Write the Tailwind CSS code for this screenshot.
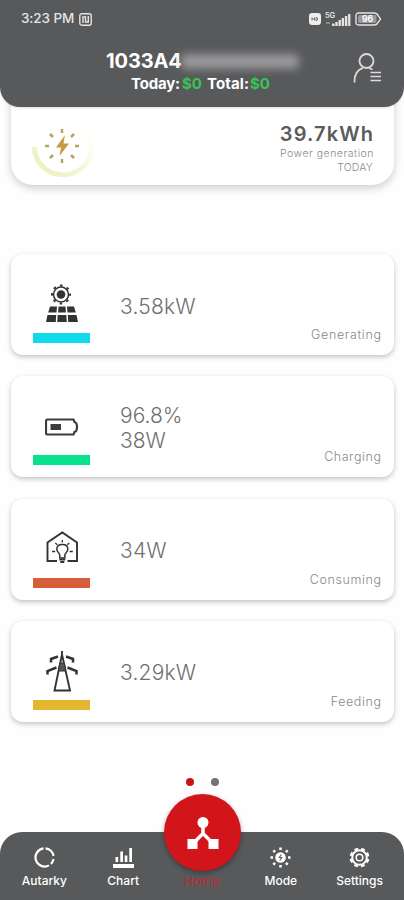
<!DOCTYPE html>
<html lang="en">

<head>
  <meta charset="UTF-8" />
  <meta name="viewport" content="width=device-width, initial-scale=1" />
  <title>Power Monitor</title>
  <script src="https://cdn.jsdelivr.net/npm/@tailwindcss/browser@4"></script>
</head>

<body class="bg-[#fefefe] h-[900px] flex flex-col overflow-hidden font-['Inter',sans-serif] text-[#707070]">
  <!-- Header -->
  <header class="relative z-10 shrink-0 h-[107px] bg-[#58595b] rounded-b-[20px] shadow-sm text-white">
    <div class="flex items-center justify-between h-[38px] pl-[21px] pr-[22px] text-[#e4e4e4]">
      <div class="flex items-center gap-[4px]">
        <span class="text-[13.5px] leading-none font-medium tracking-[-0.1px] w-[54px] whitespace-nowrap">3:23 PM</span>
        <svg class="w-[13px] h-[13px]" viewBox="0 0 13 13" fill="none" stroke="currentColor" stroke-width="1.4">
          <rect x=".8" y=".8" width="11.4" height="11.4" rx="2" />
          <path d="M4 10V4h2.5v4M9.3 3v6H6.5V5.5" />
        </svg>
      </div>
      <div class="flex items-center">
        <svg class="w-[12px] h-[12px] mr-[4px]" viewBox="0 0 12 12">
          <rect width="12" height="12" rx="3" fill="#eee" />
          <path d="M3 4.5v3M5.5 4.5v3M3 6h2.5M7 4.5h1q1.500 1.5 0 3H7z" stroke="#777" fill="none" />
        </svg>
        <svg class="w-[26px] h-[16px] mr-[4px]" viewBox="0 0 26 16" fill="currentColor">
          <text x="0" y="7" font-size="7.5" font-weight="600" textLength="10">5G</text>
          <path d="M7 12.5h2.5V15H7zM10.3 11h2.4v4h-2.4zM13.5 9h2.4v6h-2.4zM16.7 7h2.4v8h-2.4zM19.9 5h2.4v10h-2.4zM23.1 3h2.3v12h-2.3z" />
          <path d="M1 12h4" stroke="#8b8b8b" stroke-width="2" />
        </svg>
        <svg class="w-[27px] h-[14px]" viewBox="0 0 27 14">
          <path d="M3.5 1H19q3 0 4 2.5l2.5 3.500-2.5 3.500Q22 13 19 13H3.5Q1 13 1 10.5v-7Q1 1 3.5 1z" fill="none" stroke="currentColor" stroke-width="1.4" />
          <rect x="3" y="3" width="18.5" height="8" rx="1.5" fill="#999" />
          <text x="7" y="10" font-size="8.5" font-weight="700" fill="#fff" textLength="11">96</text>
        </svg>
      </div>
    </div>

    <div class="flex">
      <div class="w-[106px] shrink-0"></div>
      <div class="w-[196px]">
        <div class="flex h-[46px] items-center">
          <span class="text-[20px] font-bold leading-none tracking-[-0.1px] w-[75px] whitespace-nowrap">1033A4</span>
          <span class="w-[118px] h-[15px] rounded-[5px] bg-[#b3b3b5]/70 blur-[4px]"></span>
        </div>
        <div class="pl-[25px] -mt-[8px] text-[15px] leading-[15px] font-bold whitespace-nowrap flex">
          <span class="w-[51px] tracking-[-0.2px]">Today:</span>
          <span class="w-[25px] text-[#36c552]">$0</span>
          <span class="w-[43px] tracking-[0.1px]">Total:</span>
          <span class="text-[#36c552]">$0</span>
        </div>
      </div>
      <svg class="w-[30px] h-[32px] ml-[50px] mt-[14px]" viewBox="0 0 30 32" fill="none" stroke="#dcdcdc" stroke-width="1.8">
        <circle cx="14.5" cy="9" r="7" />
        <path d="M2.5 30.500C2 23 5.500 17.500 11 16M17 16l3.5 1.500" />
        <path d="M18.5 20.500H29M18.500 24.500H29M18.500 28.500H29" stroke-width="1.5" />
      </svg>
    </div>
  </header>

  <main class="flex-1 px-[11px]">
    <!-- Today's generation -->
    <section class="-mt-[27px] h-[105px] w-[383px] pt-[27px] bg-white rounded-[22px] shadow-[0_3px_8px_rgba(0,0,0,0.2)] flex justify-between">
      <svg class="w-[64px] h-[64px] ml-[19px] mt-[8px]" viewBox="0 0 64 64" fill="none">
        <defs>
          <linearGradient id="ring" x1="0" y1="1" x2="1" y2="0">
            <stop offset="0" stop-color="#ebefb9" />
            <stop offset=".55" stop-color="#f7f8e2" />
            <stop offset=".85" stop-color="#fffffc" />
          </linearGradient>
        </defs>
        <path d="M4.5 32A28.500 27.500 0 1 0 40 5.500" stroke="url(#ring)" stroke-width="5" />
        <path d="M32 14v4M32 44v4M15 31h4M45 31h4M20 19l3 3M41 40l3 3M20 43l3-3M41 22l3-3" stroke="#b3a65c" stroke-width="2.5" />
        <path d="M35 20L26 32.500h5L29.500 41 39 28.500h-5.500z" fill="#c59a43" />
      </svg>
      <div class="pr-[21px] pt-[17px] text-right whitespace-nowrap">
        <div class="text-[20px] leading-[20px] font-semibold tracking-[1.1px] -mr-[1px] text-[#5b5b5b]">39.7kWh</div>
        <div class="mt-[3px] text-[10.5px] leading-[14px] font-light tracking-[0.5px] -mr-[1px] text-[#888]">Power generation</div>
        <div class="text-[10.5px] leading-[14px] font-light tracking-[0.2px] text-[#888]">TODAY</div>
      </div>
    </section>

    <div class="mt-[69px] w-[383px] flex flex-col gap-[21.3px]">
      <!-- Generating -->
      <section class="h-[101px] bg-white rounded-[12px] shadow-[0_2px_5px_rgba(0,0,0,0.24)] flex">
        <div class="w-[57px] ml-[22px] pt-[29px] flex flex-col items-center">
          <svg class="w-[34px] h-[40px]" viewBox="0 0 34 40" fill="#333">
            <circle cx="16" cy="11.500" r="7.500" fill="none" stroke="#333" stroke-width="1.500" />
            <circle cx="16" cy="11.500" r="9" fill="none" stroke="#333" stroke-width="2" stroke-dasharray="2.600 4.469" stroke-dashoffset="1.300" />
            <circle cx="16" cy="11.500" r="4.300" />
            <path d="M5 23.500h7l-.5 6H3.200zM13.500 23.500h7l.4 6h-7.800zM22 23.500h7l1.800 6h-8.300zM2.500 32h8.700l-.4 7H1zM12.700 32h8.600l.5 7h-9.600zM22.800 32h8.700L33 39h-9.800z" />
          </svg>
          <div class="w-[57px] h-[10px] mt-[10px] bg-[#12daed]"></div>
        </div>
        <div class="ml-[30px] self-center pt-[3px] text-[21px] leading-[25px] font-light tracking-[0.2px]">3.58kW</div>
        <div class="ml-auto self-end pr-[13px] pb-[11px] text-[12.5px] leading-[18px] font-light tracking-[0.65px] -mr-[0.6px] text-[#888]">Generating</div>
      </section>

      <!-- Charging -->
      <section class="h-[101px] bg-white rounded-[12px] shadow-[0_2px_5px_rgba(0,0,0,0.24)] flex">
        <div class="w-[57px] ml-[22px] pt-[29px] flex flex-col items-center">
          <svg class="w-[34px] h-[40px]" viewBox="0 0 34 40" fill="none">
            <path d="M2.500 14.500h26l1 2.500q2.500.5 2.500 5t-2.500 5l-1 2.500h-26Q1 29.500 1 28V16Q1 14.500 2.500 14.500z" stroke="#3c3c3e" stroke-width="2.200" />
            <path d="M5.500 19H16v6H5.500z" fill="#3c3c3e" />
          </svg>
          <div class="w-[57px] h-[10px] mt-[10px] bg-[#07e08c]"></div>
        </div>
        <div class="ml-[30px] self-center pt-[3px] text-[21px] leading-[25px] font-light">96.8%<br />38W</div>
        <div class="ml-auto self-end pr-[13px] pb-[11px] text-[12.5px] leading-[18px] font-light tracking-[0.55px] -mr-[0.5px] text-[#888]">Charging</div>
      </section>

      <!-- Consuming -->
      <section class="h-[101px] bg-white rounded-[12px] shadow-[0_2px_5px_rgba(0,0,0,0.24)] flex">
        <div class="w-[57px] ml-[22px] pt-[29px] flex flex-col items-center">
          <svg class="w-[34px] h-[40px]" viewBox="0 0 34 40" fill="none" stroke="#333" stroke-width="1.900">
            <path d="M12 33H2.500V14.500L17.300 4.500 32 14.500V33H22.500" />
            <path d="M14.800 30v-2.500q0-1.500-1.500-3-1.500-1.500-1.500-3.500 0-4.500 5.500-4.500t5.500 4.500q0 2-1.500 3.500t-1.500 3V30z" stroke-width="1.500" />
            <path d="M14.300 31.500h6M15.300 34h4" stroke-width="2" />
            <path d="M17.300 12v2.500M10.300 15l2 1.800M24.300 15l-2 1.800M7 23.500h3.200M24.600 23.500h3.200" stroke-width="1.300" />
          </svg>
          <div class="w-[57px] h-[10px] mt-[10px] bg-[#d75e3b]"></div>
        </div>
        <div class="ml-[30px] self-center pt-[3px] text-[21px] leading-[25px] font-light tracking-[0.2px]">34W</div>
        <div class="ml-auto self-end pr-[13px] pb-[11px] text-[12.5px] leading-[18px] font-light tracking-[0.6px] -mr-[0.6px] text-[#888]">Consuming</div>
      </section>

      <!-- Feeding -->
      <section class="h-[101px] bg-white rounded-[12px] shadow-[0_2px_5px_rgba(0,0,0,0.24)] flex">
        <div class="w-[57px] ml-[22px] pt-[29px] flex flex-col items-center">
          <svg class="w-[34px] h-[42px]" viewBox="0 0 34 42" fill="none" stroke="#333" stroke-width="2">
            <path d="M17 1v4M17 4.500L9.500 40.500h15.500z" stroke-width="1.900" />
            <path d="M14.800 13h4.400l1.500 8h-7.400z" fill="#555" stroke-width="1" />
            <path d="M13 6.500L6 9v3.500M21 6.500L28 9v3.500M11.500 17.500L2.500 21v3.500M22.500 17.500l9 3.500v3.500" stroke-width="2.500" />
          </svg>
          <div class="w-[57px] h-[10px] mt-[8px] bg-[#e3b72f]"></div>
        </div>
        <div class="ml-[30px] self-center pt-[3px] text-[21px] leading-[25px] font-light tracking-[0.2px]">3.29kW</div>
        <div class="ml-auto self-end pr-[13px] pb-[11px] text-[12.5px] leading-[18px] font-light tracking-[0.6px] -mr-[0.6px] text-[#888]">Feeding</div>
      </section>
    </div>

    <!-- Page dots -->
    <div class="mt-[56px] flex justify-center gap-[17px]">
      <span class="w-[8px] h-[8px] rounded-full bg-[#cc1219]"></span>
      <span class="w-[8px] h-[8px] rounded-full bg-[#737373]"></span>
    </div>
  </main>

  <!-- Bottom navigation -->
  <nav class="relative shrink-0 h-[68px] px-[5px] bg-[#58595b] rounded-t-[22px] grid grid-cols-5 text-center text-white text-[12px] leading-[14px] font-medium">
    <div class="pt-[15px] flex flex-col items-center gap-[6px]">
      <svg class="w-[21px] h-[21px]" viewBox="0 0 21 21" fill="none" stroke="currentColor" stroke-width="2.2">
        <path d="M11.500 1.400A9.100 9.100 0 0 1 19.500 9M19.500 12A9.100 9.100 0 0 1 17 17M15 18.400A9.100 9.100 0 1 1 9.500 1.400" />
      </svg>
      <span>Autarky</span>
    </div>
    <div class="pt-[15px] flex flex-col items-center gap-[6px]">
      <svg class="w-[21px] h-[21px]" viewBox="0 0 21 21" fill="currentColor">
        <path d="M0 17h21v4H0zM2.500 10h2.700v5H2.500zM7.300 4.500H10V15H7.300zM11.700 8.500h2.700V15h-2.700zM16.300 1H19v14h-2.700z" />
      </svg>
      <span>Chart</span>
    </div>
    <div class="pt-[42px] text-[13px] font-normal text-[#b82d33]">Home</div>
    <div class="pt-[15px] flex flex-col items-center gap-[6px]">
      <svg class="w-[21px] h-[21px]" viewBox="0 0 21 21" fill="none" stroke="currentColor" stroke-width="2.500">
        <circle cx="10.500" cy="10.500" r="5.300" fill="currentColor" stroke="none" />
        <path d="M10.500 .5V3M10.500 18v2.500M.5 10.500H3M18 10.500h2.500M3.300 3.300l1.800 1.800M15.900 15.900l1.800 1.800M3.300 17.700l1.800-1.800M15.900 5.100l1.800-1.800" />
        <path d="M11.300 7.500l-2 3h2.400l-2 3" stroke="#58595b" stroke-width="1.100" />
      </svg>
      <span>Mode</span>
    </div>
    <div class="pt-[15px] flex flex-col items-center gap-[6px]">
      <svg class="w-[21px] h-[21px]" viewBox="0 0 21 21" fill="none" stroke="currentColor">
        <circle cx="10.500" cy="10.500" r="7.300" stroke-width="2" />
        <circle cx="10.500" cy="10.500" r="8.800" stroke-width="2.300" stroke-dasharray="3.800 3.112" stroke-dashoffset="-1.500" />
        <circle cx="10.500" cy="10.500" r="3.300" stroke-width="1.500" />
      </svg>
      <span>Settings</span>
    </div>

    <!-- Home button -->
    <div class="absolute left-[164px] -top-[38px] w-[77px] h-[77px] rounded-full bg-[#d2141b] shadow-[0_2px_5px_rgba(0,0,0,0.35)] flex items-center justify-center">
      <svg class="w-[32px] h-[34px]" viewBox="0 0 32 34" fill="#fff">
        <circle cx="16" cy="6.500" r="5.500" />
        <path d="M16 10v9M16 17.500L5.500 28M16 17.500L26.500 28" stroke="#fff" stroke-width="3.500" fill="none" />
        <path d="M.5 23h10v10H.5zM21.500 23h10v10h-10z" />
      </svg>
    </div>
  </nav>
</body>

</html>
